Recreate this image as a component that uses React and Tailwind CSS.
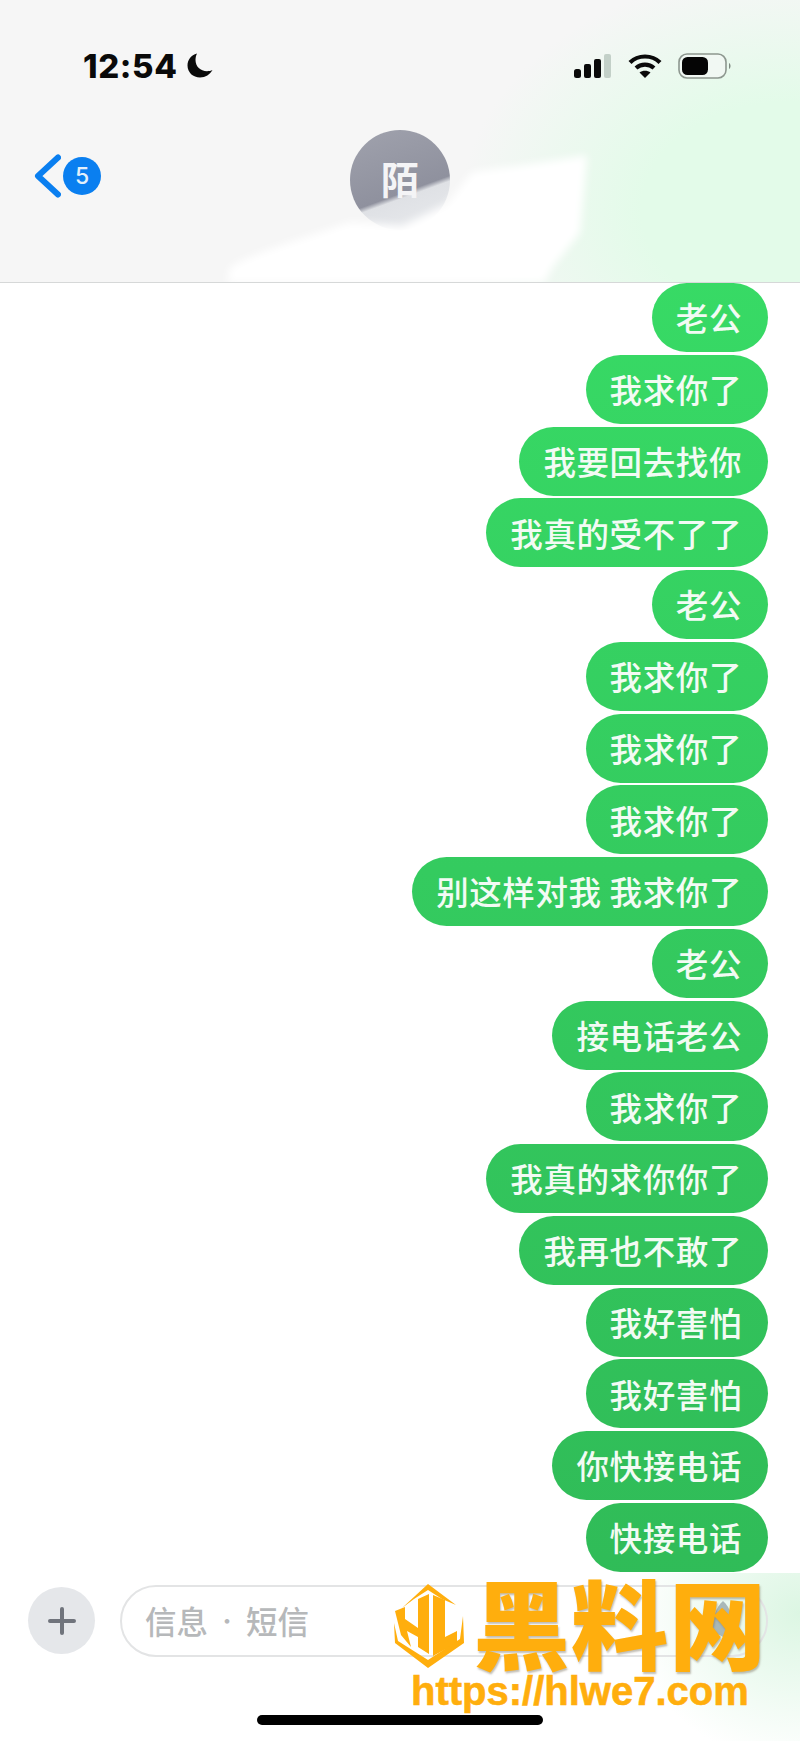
const cjk = "font-['Noto_Sans_CJK_SC','Noto_Sans',sans-serif]";

const messages = [
  "老公", "我求你了", "我要回去找你", "我真的受不了了", "老公", "我求你了", "我求你了", "我求你了",
  "别这样对我 我求你了", "老公", "接电话老公", "我求你了", "我真的求你你了", "我再也不敢了",
  "我好害怕", "我好害怕", "你快接电话", "快接电话",
];

function Moon() {
  return (
    <svg width="26" height="25" viewBox="0 0 26 25">
      <path d="M10 0.5 C4 2 0.5 7 0.5 12.5 C0.5 19.5 6 24.5 13 24.5 C18.5 24.5 23 21.5 25.5 17 C24 17.8 22 18.2 20 18.2 C13.5 18.2 8.5 13.5 8.5 7 C8.5 4.5 9 2.5 10 0.5 Z" fill="#0a0a0a" />
    </svg>
  );
}

function Signal() {
  return (
    <svg width="38" height="24" viewBox="0 0 38 24">
      <rect x="0" y="15" width="7" height="9" rx="2.5" fill="#0a0a0a" />
      <rect x="10" y="10" width="7" height="14" rx="2" fill="#0a0a0a" />
      <rect x="20" y="5" width="7" height="19" rx="2" fill="#0a0a0a" />
      <rect x="30" y="0" width="7" height="24" rx="2" fill="#c3d0c8" />
    </svg>
  );
}

function Wifi() {
  return (
    <svg width="34" height="24" viewBox="0 0 34 24" fill="none" stroke="#0a0a0a" strokeWidth="4.2">
      <path d="M2 8.5 C10 0.5 24 0.5 32 8.5" />
      <path d="M8 14 C13 9.5 21 9.5 26 14" />
      <path d="M17 24 L11.5 18.5 C14.5 16 19.5 16 22.5 18.5 Z" fill="#0a0a0a" stroke="none" />
    </svg>
  );
}

function Battery() {
  return (
    <svg width="54" height="26" viewBox="0 0 54 26">
      <rect x="1" y="1" width="47" height="24" rx="8" fill="#f1f8f3" stroke="#8d978f" strokeWidth="1.6" />
      <rect x="4" y="4" width="26" height="18" rx="5.5" fill="#050505" />
      <path d="M51 10 C53 11 53 15 51 16 Z" fill="#7f8a82" />
    </svg>
  );
}

function Logo() {
  return (
    <svg width="90" height="100" viewBox="0 0 90 100" fill="#ffae0d">
      <path d="M43 9 L71 30 L57 24 L43 15 L29 24 L17 33 Z" />
      <path d="M10 36 L20 32 L20 44 L33 53 L33 24 L44 19 L44 79 L33 72 L33 62 L22 56 L26 72 L16 60 Z" />
      <path d="M48 20 L60 25 L60 62 L72 56 L72 68 L48 81 Z" />
      <path d="M78 41 L79 68 L43 93 L10 68 L9 48 L13 66 L43 85 L75 64 Z" />
    </svg>
  );
}

export default function App() {
  return (
    <div className={`relative flex h-[1741px] w-[800px] flex-col overflow-hidden bg-white ${cjk}`}>
      <header className="relative h-[283px] shrink-0 overflow-hidden border-b border-[#d6d8d8] bg-[#f6f6f6]">
        <div className="absolute inset-0 bg-[radial-gradient(ellipse_330px_240px_at_790px_210px,#e3fbe9_45%,#f6f6f600_100%)]" />
        <div className="relative flex h-[130px] items-start justify-between pl-[83px] pr-[68px] pt-[53px]">
          <div className="flex items-center gap-[10px]">
            <span className="font-['Inter',sans-serif] text-[33px] font-extrabold leading-[24px] tracking-[0.6px] text-[#0a0a0a]">12:54</span>
            <Moon />
          </div>
          <div className="flex items-center gap-[16px]">
            <Signal />
            <Wifi />
            <Battery />
          </div>
        </div>
        <div className="relative flex justify-center">
          <div className="absolute left-[33px] top-[24px] flex items-center gap-[2px]">
            <svg width="28" height="44" viewBox="0 0 28 44" fill="none" stroke="#0a7ff0" strokeWidth="6" strokeLinecap="round" strokeLinejoin="round">
              <path d="M25 3.5 L5 22 L25 40.5" />
            </svg>
            <div className="flex h-[38px] w-[38px] items-center justify-center rounded-full bg-[#0a7ff0] font-['Inter',sans-serif] text-[23px] font-medium text-[#e3f0fb]">5</div>
          </div>
          <div className="flex h-[100px] w-[100px] items-center justify-center rounded-full bg-[linear-gradient(160deg,#a0a2ad_0%,#8f919e_60%,#dfe1e5_64%,#e9ebee_100%)] pb-[5px] text-[38px] font-bold text-[#f4f4f6]">陌</div>
        </div>
        <svg className="absolute left-0 top-0 blur-[4px]" width="800" height="283" viewBox="0 0 800 283">
          <path d="M587 155 C540 163 500 168 472 172 L447 204 L402 226 L350 222 C300 240 260 250 230 267 L226 290 L541 290 L552 268 L580 233 Z" fill="#ffffff" />
        </svg>
      </header>

      <main className="flex flex-col items-end gap-[2.76px] bg-white pr-[32px]">
        {messages.map((text, i) => (
          <div
            key={i}
            className="flex h-[69px] items-center rounded-[34.5px] bg-[linear-gradient(180deg,#39e168_0%,#34cb5f_50%,#2fb856_100%)] bg-fixed pl-[24px] pr-[26px] text-[32.5px] font-medium leading-none tracking-[0.6px] text-[#f2fbf4]"
          >
            {text}
          </div>
        ))}
      </main>

      <footer className="relative mt-[1px] flex-1 bg-white">
        <div className="absolute inset-0 bg-[radial-gradient(ellipse_170px_150px_at_800px_40px,#dcf6e3_0%,#ffffff00_100%)]" />
        <div className="relative flex items-center gap-[25px] pl-[28px] pr-[32px] pt-[12px]">
          <div className="flex h-[67px] w-[67px] shrink-0 items-center justify-center rounded-full bg-[#e5e7ea]">
            <svg width="28" height="28" viewBox="0 0 28 28" stroke="#70747c" strokeWidth="4" strokeLinecap="round">
              <path d="M14 2 V26 M2 14 H26" />
            </svg>
          </div>
          <div className="flex h-[72px] flex-1 items-center justify-between rounded-full border-2 border-[#e3e4e5] pl-[23px] pr-[30px]">
            <div className="flex items-center gap-[9px] text-[31.5px] font-medium text-[#b6b8ba]">
              <span>信息</span>
              <span className="text-[20px]">•</span>
              <span>短信</span>
            </div>
            <svg width="26" height="44" viewBox="0 0 26 44">
              <path d="M13 2 C20 8 24 20 24 32 L13 38 L2 32 C2 20 6 8 13 2 Z" fill="#a9b8b8" />
            </svg>
          </div>
        </div>
        <div className="absolute bottom-[16px] left-[257px] h-[10px] w-[286px] rounded-full bg-black" />
      </footer>

      <div className="absolute left-[385px] top-[1575px]">
        <Logo />
      </div>
      <div className="absolute left-[473px] top-[1560px] font-['Noto_Sans_CJK_SC',sans-serif] text-[97px] font-black leading-[120px] tracking-[1px] text-[#ffae0d] [text-shadow:1px_2px_2px_rgba(120,110,90,0.45)]">黑料网</div>
      <div className="absolute left-[411px] top-[1669px] font-['Liberation_Sans',sans-serif] text-[40px] font-bold leading-[44px] text-[#ffae0d] [-webkit-text-stroke:0.6px_#ffae0d]">https://hlwe7.com</div>
    </div>
  );
}
